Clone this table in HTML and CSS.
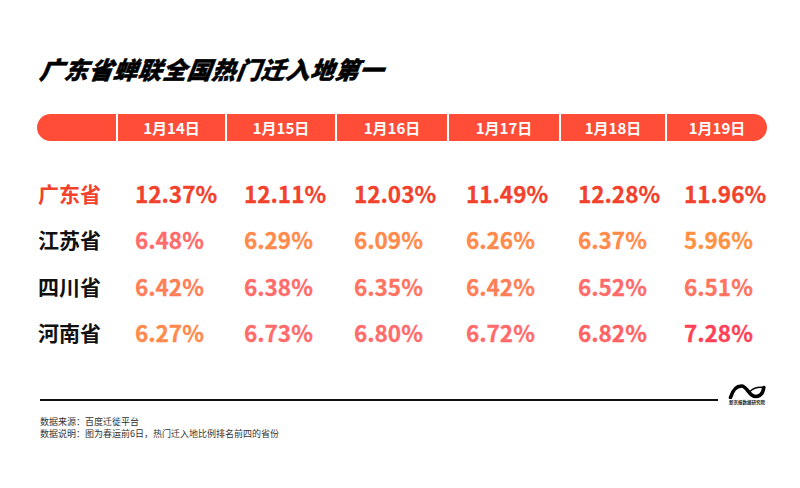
FILE: index.html
```html
<!DOCTYPE html>
<html lang="zh-CN">
<head>
<meta charset="utf-8">
<link rel="stylesheet" href="styles.css">
</head>
<body>
<div class="page">
  <h1 class="title">广东省蝉联全国热门迁入地第一</h1>
  <div class="table">
    <div class="head">
      <div class="hcell first"></div>
      <div class="hcell">1月14日</div>
      <div class="hcell">1月15日</div>
      <div class="hcell">1月16日</div>
      <div class="hcell">1月17日</div>
      <div class="hcell">1月18日</div>
      <div class="hcell last">1月19日</div>
    </div>
    <div class="body">
      <div class="row top">
        <div class="label">广东省</div>
        <div class="val">12.37%</div>
        <div class="val">12.11%</div>
        <div class="val">12.03%</div>
        <div class="val">11.49%</div>
        <div class="val">12.28%</div>
        <div class="val">11.96%</div>
      </div>
      <div class="row">
        <div class="label">江苏省</div>
        <div class="val pink">6.48%</div>
        <div class="val orange">6.29%</div>
        <div class="val orange">6.09%</div>
        <div class="val orange">6.26%</div>
        <div class="val orange">6.37%</div>
        <div class="val orange2">5.96%</div>
      </div>
      <div class="row">
        <div class="label">四川省</div>
        <div class="val coral">6.42%</div>
        <div class="val pink">6.38%</div>
        <div class="val salmon">6.35%</div>
        <div class="val coral">6.42%</div>
        <div class="val pink">6.52%</div>
        <div class="val salmon">6.51%</div>
      </div>
      <div class="row">
        <div class="label">河南省</div>
        <div class="val orange">6.27%</div>
        <div class="val pink">6.73%</div>
        <div class="val pink">6.80%</div>
        <div class="val pink">6.72%</div>
        <div class="val pink2">6.82%</div>
        <div class="val rose">7.28%</div>
      </div>
    </div>
  </div>
  <div class="rule-row">
    <div class="rule"></div>
    <div class="logo">
      <svg width="38" height="15" viewBox="0 0 38 15">
        <path d="M2.5 13.5 C5 5 9 2 13.5 2 C19 2 21 12.5 27.5 12.5 C32 12.5 35 9 35.8 3.5" fill="none" stroke="#000" stroke-width="3.6" stroke-linecap="round"/>
        <path d="M35.8 3.5 C31 2.8 26 3.5 22.5 7" fill="none" stroke="#000" stroke-width="1.4" stroke-linecap="round"/>
      </svg>
      <div class="logo-text">新京报数据研究院</div>
    </div>
  </div>
  <div class="notes">
    <p>数据来源：百度迁徙平台</p>
    <p>数据说明：图为春运前6日，热门迁入地比例排名前四的省份</p>
  </div>
</div>
</body>
</html>
```

FILE: styles.css
```css
html, body {
  margin: 0;
  padding: 0;
  background: #ffffff;
}
body {
  width: 800px;
  height: 488px;
  overflow: hidden;
  font-family: "Noto Sans CJK SC", "Noto Sans", sans-serif;
}
.page {
  padding: 54px 33px 0 37px;
}
.title {
  margin: 0;
  font-size: 24px;
  line-height: 30px;
  font-weight: 900;
  font-style: italic;
  letter-spacing: 0.6px;
  color: #000;
  transform: skewX(-8deg);
  transform-origin: left bottom;
  padding-left: 1px;
  -webkit-text-stroke: 0.5px #000;
}
.table {
  margin-top: 30px;
}
.head, .row {
  display: grid;
  grid-template-columns: 79px 107px 108px 110px 110px 104px 100px;
  column-gap: 2px;
}
.hcell {
  background: #ff4d37;
  height: 27px;
  line-height: 27px;
  color: #fff;
  font-weight: 700;
  font-size: 15px;
  text-align: center;
}
.hcell.first {
  border-radius: 14px 0 0 14px;
}
.hcell.last {
  border-radius: 0 14px 14px 0;
}
.body {
  margin-top: 28.5px;
}
.row {
  height: 46.5px;
  align-items: center;
}
.label {
  font-size: 21px;
  font-weight: 700;
  color: #111;
  padding-left: 1px;
}
.val {
  font-size: 22.5px;
  font-weight: 700;
  padding-left: 17px;
  -webkit-text-stroke: 0.3px currentColor;
}
.row.top .label,
.row.top .val {
  color: #f2412c;
}
.pink { color: #ff6b6b; }
.pink2 { color: #ff6262; }
.orange { color: #ff8a4b; }
.orange2 { color: #ff9142; }
.coral { color: #ff7e57; }
.salmon { color: #ff7360; }
.rose { color: #ff4157; }
.rule-row {
  margin-top: 28.5px;
  display: flex;
  align-items: flex-end;
  gap: 9px;
}
.rule {
  width: 678px;
  margin-left: 3px;
  height: 2px;
  background: #111;
}
.logo {
  display: flex;
  flex-direction: column;
  align-items: center;
  width: 40px;
  margin-bottom: -4px;
}
.logo svg {
  display: block;
}
.logo-text {
  font-size: 4.5px;
  line-height: 6px;
  font-weight: 700;
  color: #222;
  white-space: nowrap;
}
.notes {
  margin-top: 15px;
  padding-left: 3px;
}
.notes p {
  margin: 0;
  font-size: 9px;
  line-height: 12px;
  color: #333;
}
```
